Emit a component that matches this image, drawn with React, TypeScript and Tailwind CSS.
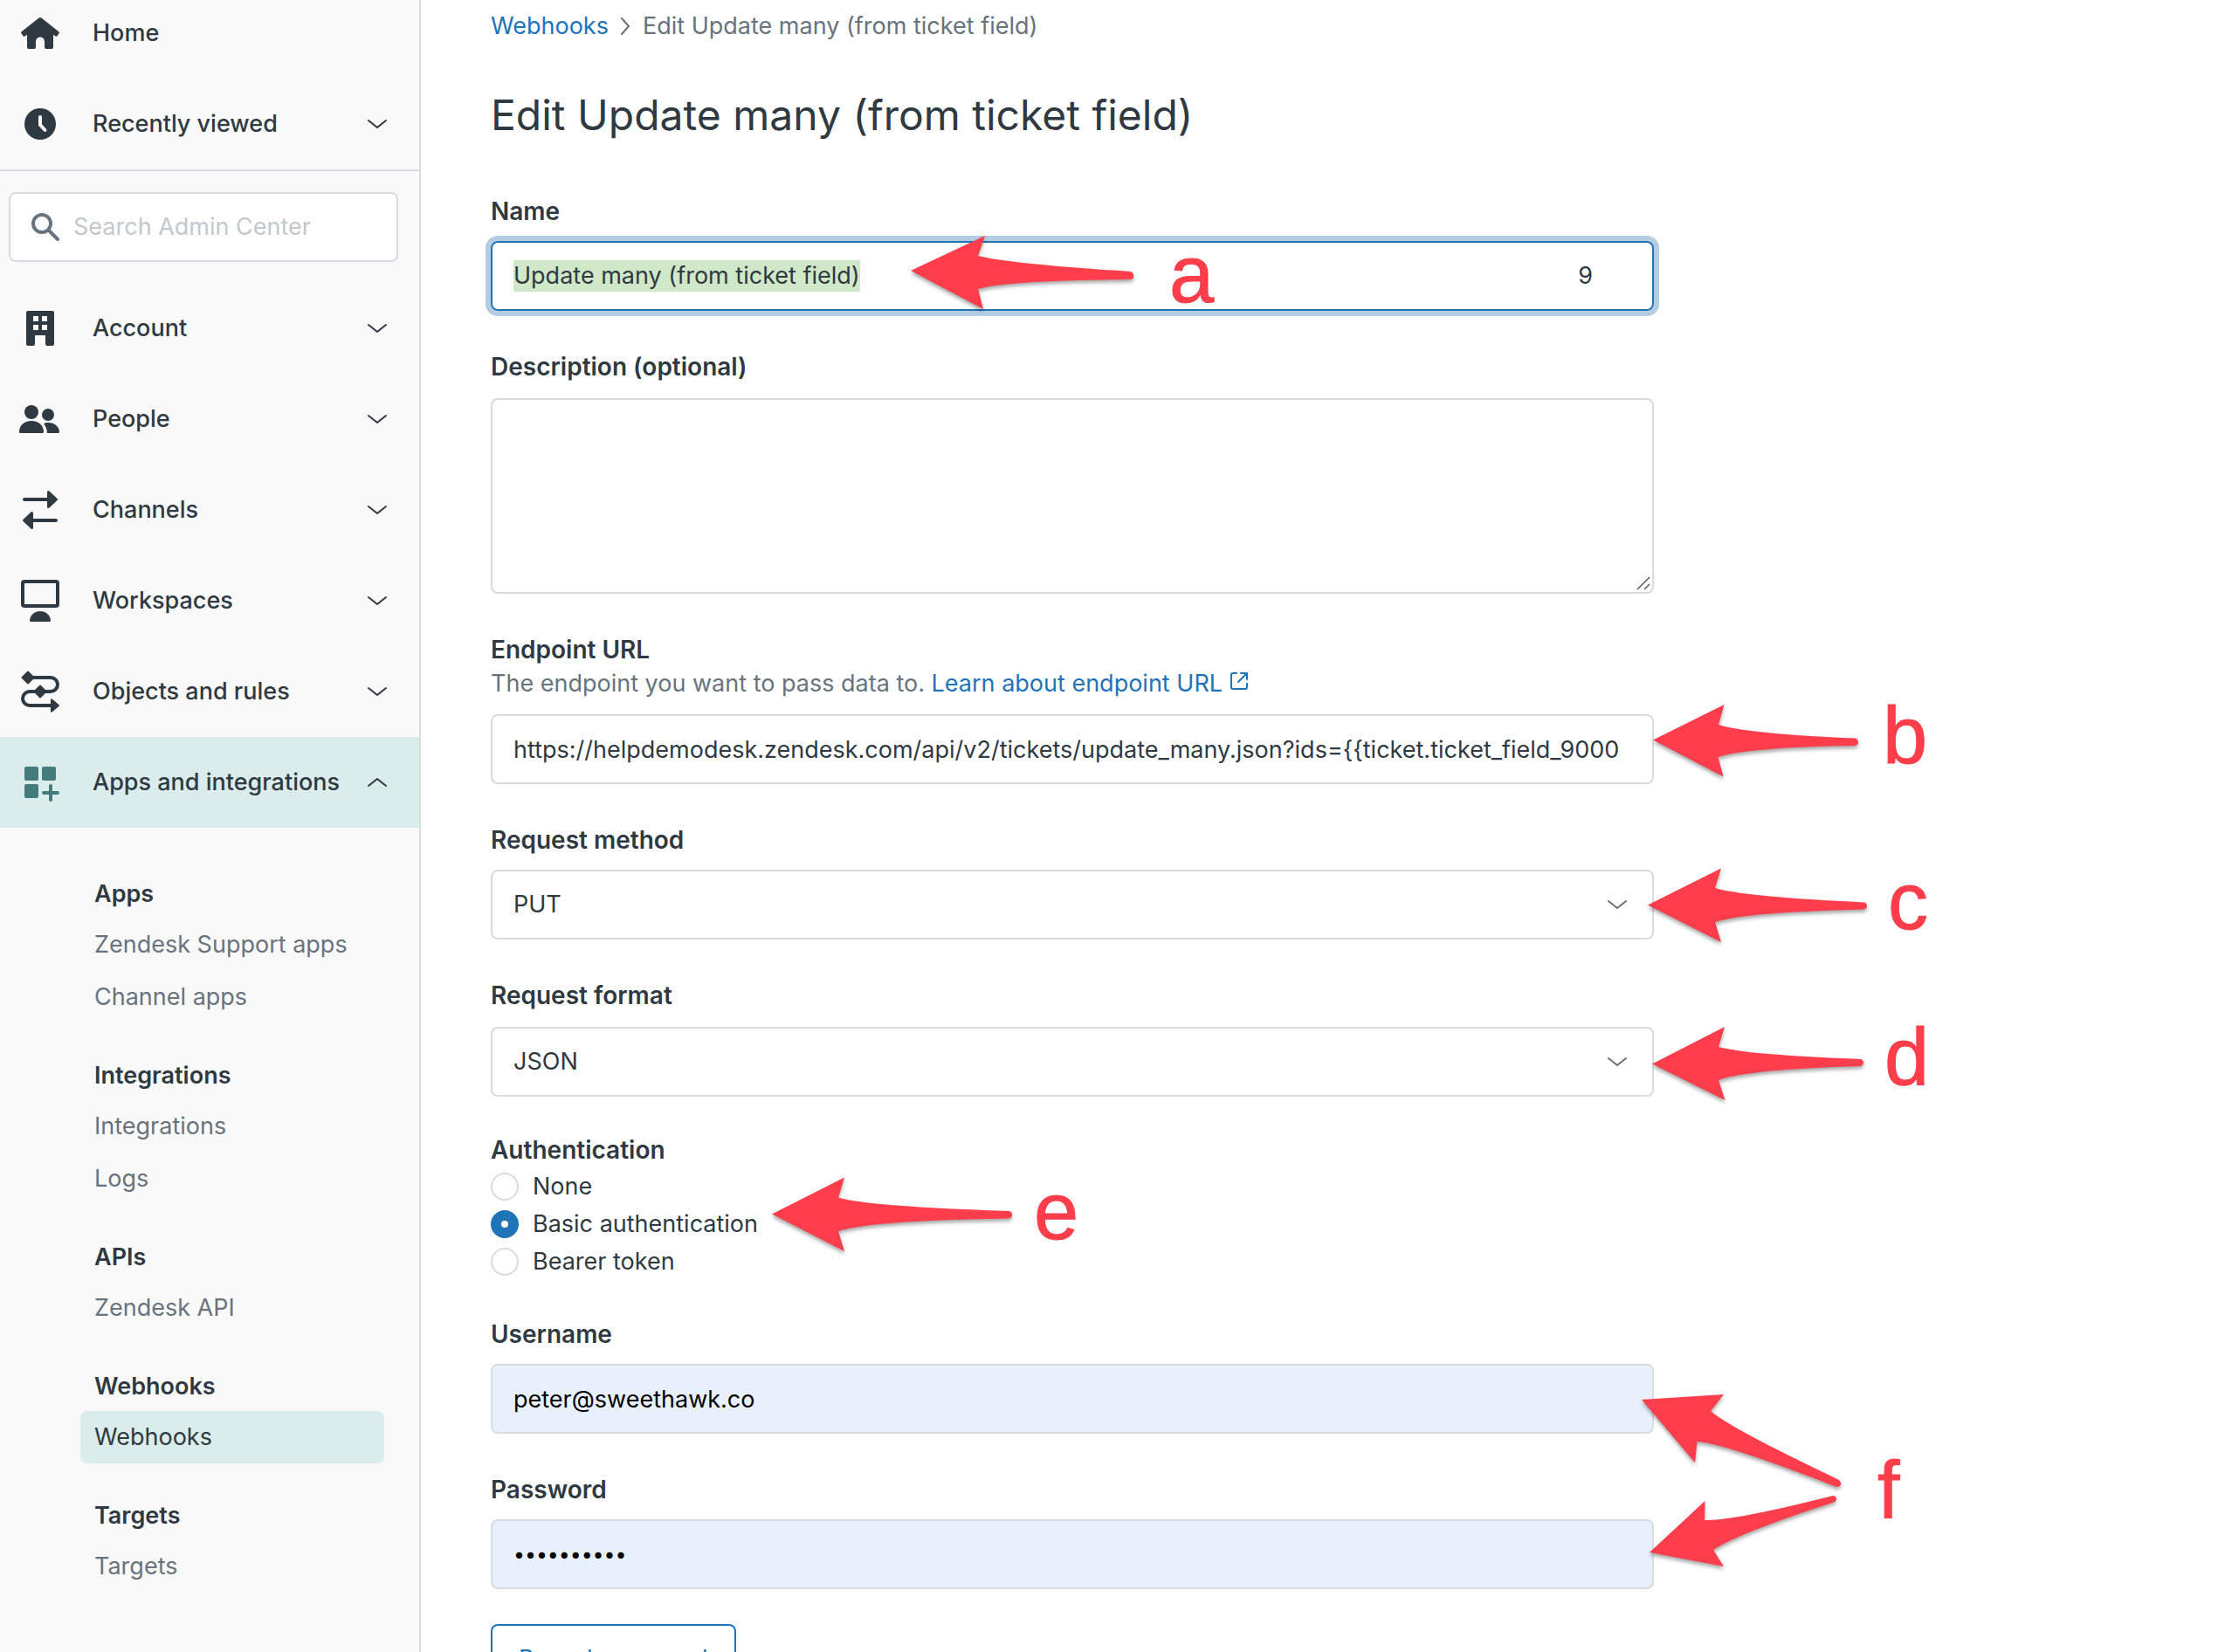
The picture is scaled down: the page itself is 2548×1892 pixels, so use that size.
import type { ReactNode } from "react";

function Chevron({ up = false, className = "" }: { up?: boolean; className?: string }) {
  return (
    <svg
      viewBox="0 0 22 12"
      aria-hidden="true"
      className={`h-3 w-[22px] shrink-0 ${className}`}
      fill="none"
      stroke="currentColor"
      strokeWidth="2"
      strokeLinecap="round"
      strokeLinejoin="round"
    >
      <path d={up ? "M1 10 11 2 21 10" : "M1 2 11 10 21 2"} />
    </svg>
  );
}

function Glyph({ children }: { children: ReactNode }) {
  return (
    <svg viewBox="0 0 48 48" aria-hidden="true" className="size-12 shrink-0 overflow-visible" fill="currentColor">
      {children}
    </svg>
  );
}

const homeIcon = (
  <Glyph>
    <path d="M22.6 6.6q1.4-1.1 2.8 0L45.3 22.2q1.1.9.3 2l-1.9 2.9q-.9 1.2-2.1.4L39 25.8V40q0 2-2 2h-6q-2 0-2-2v-6.500a5 5 0 0 0-10 0V40q0 2-2 2h-6q-2 0-2-2V25.800l-2.600 1.700q-1.200.8-2.100-.4l-1.900-2.900q-.8-1.100.3-2Z" />
  </Glyph>
);

const clockIcon = (
  <Glyph>
    <circle cx="24" cy="24" r="18" />
    <path d="M24 16v9l5.500 6" fill="none" stroke="#f9f9f9" strokeWidth="4" strokeLinecap="round" strokeLinejoin="round" />
  </Glyph>
);

const buildingIcon = (
  <Glyph>
    <path
      fillRule="evenodd"
      d="M10 4h28q2 0 2 2v36q0 2-2 2h-6q-2 0-2-2V33q0-1-1-1H19q-1 0-1 1v9q0 2-2 2h-6q-2 0-2-2V6q0-2 2-2ZM16 10v6h6v-6ZM26 10v6h6v-6ZM16 20v6h6v-6ZM26 20v6h6v-6Z"
    />
  </Glyph>
);

const peopleIcon = (
  <Glyph>
    <circle cx="14" cy="16" r="8" />
    <circle cx="33" cy="19" r="7" />
    <path d="M0 38.500C0 31 6 26 14 26s14 5 14 12.500q0 1.500-1.500 1.500h-25Q0 40 0 38.500Z" />
    <path d="M28 29.300c1.500-.9 3-1.300 5-1.300 7.500 0 13 5 13 10.500q0 1.500-1.500 1.500H32C31.600 35.500 30.800 32.500 28 29.300Z" />
  </Glyph>
);

const channelsIcon = (
  <Glyph>
    <path d="M6 12h28M14 36h28" stroke="currentColor" strokeWidth="4" strokeLinecap="round" />
    <path d="M33.500 3.500 42.500 12l-9 8.500ZM14.500 27.500 5.500 36l9 8.500Z" stroke="currentColor" strokeWidth="3" strokeLinejoin="round" />
  </Glyph>
);

const workspacesIcon = (
  <Glyph>
    <rect x="4" y="2" width="40" height="28" rx="2" fill="none" stroke="currentColor" strokeWidth="4" />
    <path d="M12 46.500C12.500 40.500 17.500 36 24 36s11.500 4.500 12 10.500q0 1.500-1.500 1.500h-21Q12 48 12 46.500Z" />
  </Glyph>
);

const rulesIcon = (
  <Glyph>
    <path d="M10 8h26a8 8 0 0 1 0 16H12a8 8 0 0 0 0 16h26" fill="none" stroke="currentColor" strokeWidth="4" />
    <path
      d="M10 1.500 16.500 8 10 14.500 3.500 8ZM24 17.500l6.500 6.500-6.500 6.500-6.500-6.500ZM37 33.200 45 40l-8 6.800Z"
      stroke="currentColor"
      strokeWidth="2"
      strokeLinejoin="round"
    />
  </Glyph>
);

const appsIcon = (
  <Glyph>
    <rect x="6" y="6" width="16" height="16" rx="2" />
    <rect x="26" y="6" width="16" height="16" rx="2" />
    <rect x="6" y="26" width="16" height="16" rx="2" />
    <path d="M36 28v16M28 36h16" stroke="currentColor" strokeWidth="4" strokeLinecap="round" />
  </Glyph>
);

function NavRow({ icon, label, chevron = true, active = false }: { icon: ReactNode; label: string; chevron?: boolean; active?: boolean }) {
  return (
    <button
      type="button"
      aria-expanded={chevron ? active : undefined}
      className={`flex h-[104px] w-full items-center pr-[37px] pl-[22px] text-left font-medium ${active ? "bg-[#daeceb]" : ""}`}
    >
      <span className={active ? "text-[#467b7c]" : ""}>{icon}</span>
      <span className="ml-9 grow whitespace-nowrap">{label}</span>
      {chevron && <Chevron up={active} />}
    </button>
  );
}

const sections = [
  { title: "Apps", items: ["Zendesk Support apps", "Channel apps"] },
  { title: "Integrations", items: ["Integrations", "Logs"] },
  { title: "APIs", items: ["Zendesk API"] },
  { title: "Webhooks", items: ["Webhooks"], current: true },
  { title: "Targets", items: ["Targets"] },
];

function Sidebar() {
  return (
    <aside className="w-[482px] shrink-0 overflow-hidden border-r-2 border-[#d8dcde] bg-[#f9f9f9]">
      <nav aria-label="Admin Center">
        <div className="-mt-3.5 border-b-2 border-[#d8dcde]">
          <NavRow icon={homeIcon} label="Home" chevron={false} />
          <NavRow icon={clockIcon} label="Recently viewed" />
        </div>
        <div className="py-6 pr-6 pl-2.5">
          <label className="flex h-20 items-center gap-4 rounded-lg border-2 border-[#d8dcde] bg-white pr-4 pl-6 text-[#68737d]">
            <svg viewBox="0 0 32 32" aria-hidden="true" className="size-8 shrink-0" fill="none" stroke="currentColor" strokeWidth="4" strokeLinecap="round">
              <circle cx="12" cy="12" r="10" />
              <path d="m19.500 19.500 10.500 10.500" />
            </svg>
            <input
              type="search"
              aria-label="Search Admin Center"
              placeholder="Search Admin Center"
              className="w-full min-w-0 bg-transparent outline-none placeholder:text-[#c2c8cc]"
            />
          </label>
        </div>
        <NavRow icon={buildingIcon} label="Account" />
        <NavRow icon={peopleIcon} label="People" />
        <NavRow icon={channelsIcon} label="Channels" />
        <NavRow icon={workspacesIcon} label="Workspaces" />
        <NavRow icon={rulesIcon} label="Objects and rules" />
        <NavRow icon={appsIcon} label="Apps and integrations" active />
        <div className="flex flex-col gap-8 pt-12 pr-10 pl-[92px]">
          {sections.map((section) => (
            <section key={section.title}>
              <h2 className="px-4 leading-[56px] font-semibold">{section.title}</h2>
              <ul>
                {section.items.map((item) => (
                  <li key={item}>
                    <a
                      href="#"
                      aria-current={section.current ? "page" : undefined}
                      className={`block rounded-lg px-4 leading-[60px] whitespace-nowrap ${section.current ? "bg-[#daeceb]" : "text-[#68737d]"}`}
                    >
                      {item}
                    </a>
                  </li>
                ))}
              </ul>
            </section>
          ))}
        </div>
      </nav>
    </aside>
  );
}

/* Hand-drawn style pointer; each path is drawn in its own local box. */
function Arrow({ className, viewBox, children }: { className: string; viewBox: string; children: ReactNode }) {
  return (
    <svg
      viewBox={viewBox}
      aria-hidden="true"
      className={`pointer-events-none absolute z-10 overflow-visible drop-shadow-[0_3px_2px_rgba(0,0,0,0.35)] ${className}`}
      fill="#ff3d4b"
    >
      {children}
    </svg>
  );
}

function Letter({ className, children }: { className: string; children: string }) {
  return (
    <span
      className={`pointer-events-none absolute z-10 font-['Liberation_Sans',Arial,sans-serif] text-[92px] leading-none text-[#ff3d4b] [-webkit-text-stroke:1px_#ff3d4b] ${className}`}
    >
      {children}
    </span>
  );
}

const labelClass = "block text-[28px] leading-10 font-semibold";
const boxClass = "block h-20 w-full rounded-lg border-2 border-[#d8dcde] px-6";

function Select({ id, value }: { id: string; value: string }) {
  return (
    <>
      <select id={id} defaultValue={value} className={`${boxClass} appearance-none bg-white`}>
        <option>{value}</option>
      </select>
      <Chevron className="pointer-events-none absolute top-[34px] right-[31px] text-[#68737d]" />
    </>
  );
}

function Radio({ label, checked = false }: { label: string; checked?: boolean }) {
  return (
    <label className="flex h-[43px] items-center gap-4">
      <input
        type="radio"
        name="authentication"
        defaultChecked={checked}
        className="size-8 shrink-0 appearance-none rounded-full border-2 border-[#d8dcde] bg-white checked:border-[12px] checked:border-[#1f73b7]"
      />
      {label}
    </label>
  );
}

export default function App() {
  return (
    <div className="flex h-screen overflow-hidden bg-white font-[Inter,'Noto_Sans',sans-serif] text-[27px] leading-10 text-[#2f3941]">
      <Sidebar />
      <main className="min-w-0 grow overflow-hidden pt-2.5 pl-20">
        <div className="w-full max-w-[1332px]">
          <nav aria-label="Breadcrumb" className="flex items-center gap-3.5 text-[#68737d]">
            <a href="#" className="text-[#1f73b7]">
              Webhooks
            </a>
            <svg viewBox="0 0 11 20" aria-hidden="true" className="h-5 w-[11px]" fill="none" stroke="currentColor" strokeWidth="2" strokeLinecap="round" strokeLinejoin="round">
              <path d="m1 1 8 9-8 9" />
            </svg>
            <span>Edit Update many (from ticket field)</span>
          </nav>
          <h1 className="mt-[50px] text-[48px] leading-[64px]">Edit Update many (from ticket field)</h1>

          <form className="mt-[58px]">
            <label htmlFor="name" className={labelClass}>
              Name
            </label>
            <div className="relative mt-3.5">
              <div className="flex h-20 w-full items-center justify-between rounded-lg border-2 border-[#1f73b7] pr-[68px] pl-6 ring-6 ring-[#b4cce4]">
                <input id="name" defaultValue="Update many (from ticket field)" className="field-sizing-content h-9 bg-[#d1e8c8] outline-none" />
                <span>9</span>
              </div>
              <Arrow className="-top-2 left-[478px] h-[96px] w-[264px]" viewBox="1040 268 264 96">
                <path d="M1043 310 1128 270 1120 293Q1155 302 1295 311 1299 313 1298 318 1297 320 1294 320 1150 321 1120 331L1126 354Z" />
              </Arrow>
              <Letter className="-top-2 left-[777px]">a</Letter>
            </div>

            <label htmlFor="description" className={`mt-11 ${labelClass}`}>
              Description (optional)
            </label>
            <div className="relative mt-4">
              <textarea id="description" className="block h-56 w-full resize-none rounded-lg border-2 border-[#d8dcde] px-6 py-4" />
              <svg viewBox="0 0 16 16" aria-hidden="true" className="pointer-events-none absolute right-1 bottom-1 size-4" fill="none" stroke="#5a5a5a" strokeWidth="1.500">
                <path d="M1 15 15 1M9 15l6-6" />
              </svg>
            </div>

            <label htmlFor="endpoint" className={`mt-11 ${labelClass}`}>
              Endpoint URL
            </label>
            <p className="leading-[38px] text-[#68737d]">
              The endpoint you want to pass data to.{" "}
              <a href="#" className="text-[#1f73b7]">
                Learn about endpoint URL
                <svg viewBox="0 0 22 22" aria-hidden="true" className="ml-2 inline-block size-[22px] align-baseline" fill="none" stroke="currentColor" strokeWidth="2" strokeLinecap="round" strokeLinejoin="round">
                  <path d="M8 1H4a2 2 0 0 0-2 2v14a2 2 0 0 0 2 2h14a2 2 0 0 0 2-2v-4M13 1h7v7M20 1 10 11" />
                </svg>
              </a>
            </p>
            <div className="relative mt-4">
              <input
                id="endpoint"
                defaultValue="https://helpdemodesk.zendesk.com/api/v2/tickets/update_many.json?ids={{ticket.ticket_field_9000"
                className={boxClass}
              />
              <Arrow className="-top-3.5 left-full -ml-2 h-[92px] w-[248px]" viewBox="1886 804 248 92">
                <path d="M1893 847.500 1974.500 807 1968 830Q1998 840 2125 845.500 2128 847 2128 850 2128 853.500 2124 854 1998 856 1967.500 867L1973.500 889.500Z" />
              </Arrow>
              <Letter className="-top-[22px] left-full ml-[262px]">b</Letter>
            </div>

            <label htmlFor="method" className={`mt-11 ${labelClass}`}>
              Request method
            </label>
            <div className="relative mt-3.5">
              <Select id="method" value="PUT" />
              <Arrow className="-top-1 left-full -ml-3.5 h-[92px] w-[260px]" viewBox="1880 992 260 92">
                <path d="M1887 1036.500 1971 994.500 1964 1017Q1996 1027 2135 1033.500 2138 1034.500 2138 1037.500 2138 1041 2134 1041.500 1996 1045 1964 1056L1971 1079Z" />
              </Arrow>
              <Letter className="-top-2.5 left-full ml-[268px]">c</Letter>
            </div>

            <label htmlFor="format" className={`mt-11 ${labelClass}`}>
              Request format
            </label>
            <div className="relative mt-4">
              <Select id="format" value="JSON" />
              <Arrow className="-top-0.5 left-full -ml-2 h-[92px] w-[252px]" viewBox="1886 1174 252 92">
                <path d="M1892 1218.500 1975 1176 1968 1199Q2000 1208 2131 1213 2134 1214 2134 1217 2134 1220.500 2130 1221 2000 1225 1968 1237L1975.500 1260Z" />
              </Arrow>
              <Letter className="-top-3 left-full ml-[264px]">d</Letter>
            </div>

            <fieldset className="mt-[41px]">
              <legend className={labelClass}>Authentication</legend>
              <div className="relative">
                <Radio label="None" />
                <Radio label="Basic authentication" checked />
                <Radio label="Bearer token" />
                <Arrow className="top-[9px] left-[318px] h-[96px] w-[284px]" viewBox="880 1346 284 96">
                  <path d="M884 1390.500 967 1348.500 960 1371.500Q995 1382 1156 1387 1159 1388 1159 1391 1159 1395 1155 1395.500 995 1398 960 1410L967 1433Z" />
                </Arrow>
                <Letter className="top-1 left-[622px]">e</Letter>
              </div>
            </fieldset>

            <label htmlFor="username" className={`mt-[42px] ${labelClass}`}>
              Username
            </label>
            <div className="relative mt-3.5">
              <input id="username" defaultValue="peter@sweethawk.co" className={`${boxClass} bg-[#e8f0fe] text-black`} />
              <Arrow className="top-8 left-full -ml-[18px] h-[206px] w-[236px]" viewBox="1876 1594 236 206">
                <path d="M1880 1603 1974 1597 1959 1616Q1980 1635 2106 1695 2109 1698 2108 1700.500 2106 1704 2102 1702.500 1975 1653 1943.500 1651L1941 1675Z" />
                <path d="M1889 1778 1952.500 1719 1952 1741Q1985 1742 2099 1713 2102 1713 2103 1716 2103 1719 2100 1720.500 1990 1756 1962 1775L1974 1794Z" />
              </Arrow>
              <Letter className="top-[98px] left-full ml-[256px]">f</Letter>
            </div>

            <label htmlFor="password" className={`mt-11 ${labelClass}`}>
              Password
            </label>
            <input
              id="password"
              type="password"
              defaultValue="0123456789"
              className={`mt-3.5 ${boxClass} bg-[#e8f0fe] text-[23px] text-black`}
            />

            <button type="button" className="mt-10 h-20 rounded-lg border-2 border-[#1f73b7] px-[30px] text-[#1f73b7]">
              Reveal password
            </button>
          </form>
        </div>
      </main>
    </div>
  );
}
